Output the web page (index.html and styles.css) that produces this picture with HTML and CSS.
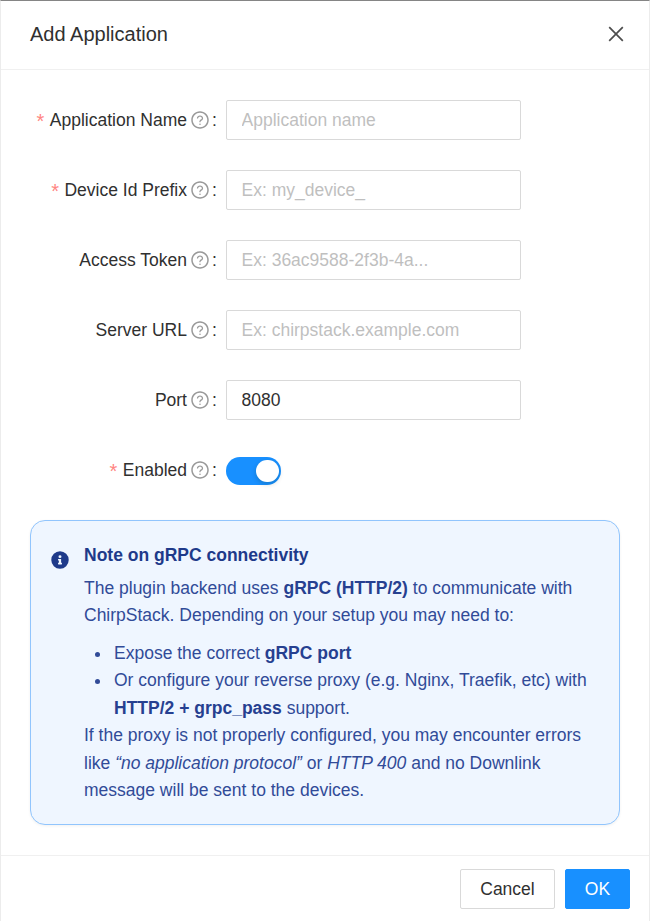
FILE: index.html
```
<!DOCTYPE html>
<html lang="en">
<head>
<meta charset="utf-8">
<title>Add Application</title>
<link rel="stylesheet" href="styles.css">
</head>
<body>
<svg width="0" height="0" class="sprite" aria-hidden="true">
  <symbol id="help" viewBox="0 0 1024 1024"><path d="M512 64C264.600 64 64 264.600 64 512s200.600 448 448 448 448-200.600 448-448S759.400 64 512 64zm0 820c-205.400 0-372-166.600-372-372s166.600-372 372-372 372 166.600 372 372-166.600 372-372 372z"/><path d="M623.600 316.700C593.600 290.400 554 276 512 276s-81.600 14.500-111.600 40.700C369.200 344 352 380.700 352 420v7.600c0 4.400 3.600 8 8 8h48c4.400 0 8-3.600 8-8V420c0-44.100 43.100-80 96-80s96 35.900 96 80c0 31.100-22 59.600-56.100 72.700-21.200 8.100-39.200 22.300-52.100 40.900-13.100 19-19.900 41.800-19.900 64.900V620c0 4.400 3.600 8 8 8h48c4.400 0 8-3.600 8-8v-22.700a48.300 48.300 0 0 1 30.900-44.800c59-22.700 97.100-74.700 97.100-132.500.1-39.300-17.100-76-48.300-103.300zM472 732a40 40 0 1 0 80 0 40 40 0 1 0-80 0z"/></symbol>
</svg>
<main class="modal">
  <header class="modal-header">
    <h1>Add Application</h1>
    <button class="close" aria-label="Close"><svg viewBox="0 0 16 16"><path d="M1.200 1.200 14.800 14.800M14.800 1.200 1.200 14.800"/></svg></button>
  </header>
  <form class="modal-body">
    <div class="row"><label class="required" for="name">Application Name</label><svg class="help"><use href="#help"/></svg><span class="colon">:</span><input id="name" placeholder="Application name"></div>
    <div class="row"><label class="required" for="prefix">Device Id Prefix</label><svg class="help"><use href="#help"/></svg><span class="colon">:</span><input id="prefix" placeholder="Ex: my_device_"></div>
    <div class="row"><label for="token">Access Token</label><svg class="help"><use href="#help"/></svg><span class="colon">:</span><input id="token" placeholder="Ex: 36ac9588-2f3b-4a..."></div>
    <div class="row"><label for="url">Server URL</label><svg class="help"><use href="#help"/></svg><span class="colon">:</span><input id="url" placeholder="Ex: chirpstack.example.com"></div>
    <div class="row"><label for="port">Port</label><svg class="help"><use href="#help"/></svg><span class="colon">:</span><input id="port" value="8080"></div>
    <div class="row"><label class="required">Enabled</label><svg class="help"><use href="#help"/></svg><span class="colon">:</span><button type="button" class="switch" role="switch" aria-checked="true" aria-label="Enabled"><span class="knob"></span></button></div>
    <section class="note">
      <svg class="info" viewBox="0 0 512 512"><path fill-rule="evenodd" d="M256 8a248 248 0 1 0 0 496 248 248 0 1 0 0-496zm0 110a42 42 0 1 1 0 84 42 42 0 1 1 0-84zm56 254c0 6.600-5.400 12-12 12h-88c-6.600 0-12-5.400-12-12v-24c0-6.600 5.400-12 12-12h12v-64h-12c-6.600 0-12-5.400-12-12v-24c0-6.600 5.400-12 12-12h64c6.600 0 12 5.400 12 12v100h12c6.600 0 12 5.400 12 12z"/></svg>
      <div class="note-text">
        <h2>Note on gRPC connectivity</h2>
        <p>The plugin backend uses <b>gRPC (HTTP/2)</b> to communicate with ChirpStack. Depending on your setup you may need to:</p>
        <ul>
          <li>Expose the correct <b>gRPC port</b></li>
          <li>Or configure your reverse proxy (e.g. Nginx, Traefik, etc) with <b>HTTP/2 + grpc_pass</b> support.</li>
        </ul>
        <p>If the proxy is not properly configured, you may encounter errors like <em>“no application protocol”</em> or <em>HTTP 400</em> and no Downlink message will be sent to the devices.</p>
      </div>
    </section>
  </form>
  <footer class="modal-footer">
    <button class="btn">Cancel</button>
    <button class="btn primary">OK</button>
  </footer>
</main>
</body>
</html>
```
FILE: styles.css
```
* { box-sizing: border-box; }
body {
  margin: 0;
  font: 17.5px/27.5px "Liberation Sans", Arial, sans-serif;
  color: #303030;
  background: #fff;
}
.sprite { display: block; }
button, input { font: inherit; color: inherit; margin: 0; }
h1, h2, p { margin: 0; }
.modal {
  height: 921px;
  display: flex;
  flex-direction: column;
  border: 1px solid #ececec;
  border-top-color: #858585;
  border-bottom: 0;
}
.modal-header {
  height: 69px;
  flex: none;
  display: flex;
  align-items: center;
  justify-content: space-between;
  padding: 0 25px 2px 29px;
  border-bottom: 1px solid #f0f0f0;
}
h1 { font-size: 20px; font-weight: 400; line-height: 28px; }
.close { display: flex; padding: 0; border: 0; background: none; }
.close svg { width: 16px; height: 16px; fill: none; stroke: #4d4d4d; stroke-width: 1.7; }
.modal-body { flex: 1; padding: 30px 29px 0; }
.row {
  height: 40px;
  margin-bottom: 30px;
  display: grid;
  grid-template-columns: 157px 23px 16px 295px;
  align-items: center;
}
label, .colon { padding-top: 2px; white-space: nowrap; }
label { text-align: right; }
.required::before {
  content: "*";
  display: inline-block;
  height: 20px;
  margin-right: 5.5px;
  font-size: 20px;
  line-height: 20px;
  vertical-align: -2px;
  color: #ff8582;
}
.help { width: 20px; height: 20px; margin-left: 3px; fill: #999; }
.colon { padding-left: 2px; }
input {
  width: 295px;
  height: 40px;
  padding: 0 14.5px;
  border: 1px solid #d9d9d9;
  border-radius: 2px;
  background: #fff;
}
input::placeholder { color: #bfbfbf; opacity: 1; }
.switch {
  width: 55px;
  height: 28px;
  display: flex;
  align-items: center;
  justify-content: flex-end;
  padding: 0 2.5px;
  margin-top: 2px;
  border: 0;
  border-radius: 14px;
  background: #1890ff;
}
.knob {
  width: 22.5px;
  height: 22.5px;
  border-radius: 50%;
  background: #fff;
  box-shadow: 0 2px 5px rgba(0, 35, 11, .2);
}
.note {
  height: 305px;
  display: flex;
  padding: 21px 20px 19px;
  border: 1px solid #91c5fd;
  border-radius: 15px;
  background: #eff6ff;
  box-shadow: 0 1px 3px rgba(0, 0, 0, .06);
  color: #1e3a8a;
}
.info { flex: none; width: 18px; height: 18px; margin: 9px 15px 0 0; fill: #1e3a8a; }
h2 { margin-bottom: 5px; font-size: 17.5px; font-weight: 700; line-height: 27.5px; }
.note-text p, .note-text li { color: #314b98; }
.note-text b { color: #264090; }
ul { margin: 10px 0 0; padding-left: 30px; list-style: none; }
li::before {
  content: "";
  display: inline-block;
  width: 5px;
  height: 5px;
  margin: 0 14px 0 -19px;
  border-radius: 50%;
  background: currentColor;
  vertical-align: 2px;
}
.modal-footer {
  height: 66px;
  flex: none;
  display: flex;
  justify-content: flex-end;
  gap: 10px;
  padding: 13px 19px;
  border-top: 1px solid #f0f0f0;
}
.btn {
  width: 95px;
  height: 40px;
  padding: 2px 0 0;
  border: 1px solid #d9d9d9;
  border-radius: 2px;
  background: #fff;
}
.primary { width: 65px; border-color: #1890ff; background: #1890ff; color: #fff; }
```
